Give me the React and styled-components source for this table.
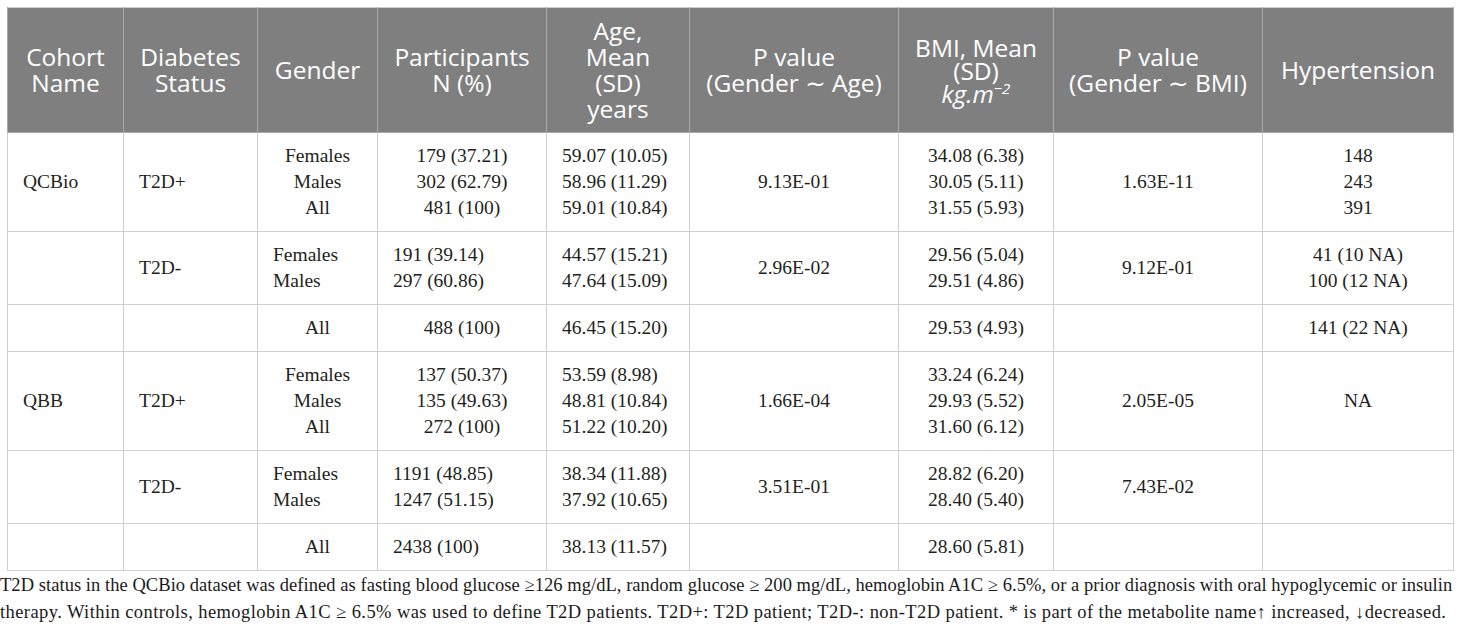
import React from 'react';
import styled, { createGlobalStyle } from 'styled-components';

const GlobalStyle = createGlobalStyle`
  html, body {
    margin: 0;
    padding: 0;
    background: #ffffff;
  }
`;

const Page = styled.div`
  width: 1460px;
  padding-top: 7px;
`;

const Table = styled.table`
  margin-left: 7px;
  width: 1446px;
  table-layout: fixed;
  border-collapse: collapse;
  border: 1px solid #cfcfcf;
`;

const HeadCell = styled.th`
  background: #7f7f7f;
  color: #ffffff;
  font-family: 'Open Sans', 'DejaVu Sans', sans-serif;
  font-weight: 400;
  font-size: 24.5px;
  line-height: ${(p) => (p.$tight ? '23px' : '26px')};
  text-align: center;
  vertical-align: middle;
  padding: 10px 4px;
  height: 104px;
  border-left: 1px solid #a9a9a9;
  border-right: 1px solid #a9a9a9;
  border-bottom: 1px solid #a9a9a9;

  i {
    font-style: italic;
  }
  sup {
    font-size: 15px;
    line-height: 0;
    vertical-align: 9px;
  }
`;

const Cell = styled.td`
  font-family: 'Liberation Serif', 'Times New Roman', serif;
  font-size: 19.5px;
  line-height: 26px;
  color: #231f20;
  text-align: ${(p) => p.$align};
  vertical-align: middle;
  padding: 10px ${(p) => (p.$align === 'left' ? '4px 10px 15px' : '4px')};
  border: 1px solid #cfcfcf;
  white-space: nowrap;
`;

const Footnote = styled.p`
  margin: 0;
  padding-top: 1px;
  font-family: 'Liberation Serif', 'Times New Roman', serif;
  font-size: 18.5px;
  line-height: 27px;
  color: #1a1a1a;
`;

// the two footnote lines both fill the width in the source figure
const FootLine = styled.span`
  display: block;
  white-space: nowrap;
  letter-spacing: ${(p) => p.$spread}px;
`;

const widths = [116, 134, 120, 169, 143, 209, 155, 209, 191];

const rows = [
  {
    cohort: 'QCBio',
    status: 'T2D+',
    gender: ['Females', 'Males', 'All'],
    genderAlign: 'center',
    n: ['179 (37.21)', '302 (62.79)', '481 (100)'],
    nAlign: 'center',
    age: ['59.07 (10.05)', '58.96 (11.29)', '59.01 (10.84)'],
    pAge: '9.13E-01',
    bmi: ['34.08 (6.38)', '30.05 (5.11)', '31.55 (5.93)'],
    pBmi: '1.63E-11',
    hyp: ['148', '243', '391'],
  },
  {
    cohort: '',
    status: 'T2D-',
    gender: ['Females', 'Males'],
    genderAlign: 'left',
    n: ['191 (39.14)', '297 (60.86)'],
    nAlign: 'left',
    age: ['44.57 (15.21)', '47.64 (15.09)'],
    pAge: '2.96E-02',
    bmi: ['29.56 (5.04)', '29.51 (4.86)'],
    pBmi: '9.12E-01',
    hyp: ['41 (10 NA)', '100 (12 NA)'],
  },
  {
    cohort: '',
    status: '',
    gender: ['All'],
    genderAlign: 'center',
    n: ['488 (100)'],
    nAlign: 'center',
    age: ['46.45 (15.20)'],
    pAge: '',
    bmi: ['29.53 (4.93)'],
    pBmi: '',
    hyp: ['141 (22 NA)'],
  },
  {
    cohort: 'QBB',
    status: 'T2D+',
    gender: ['Females', 'Males', 'All'],
    genderAlign: 'center',
    n: ['137 (50.37)', '135 (49.63)', '272 (100)'],
    nAlign: 'center',
    age: ['53.59 (8.98)', '48.81 (10.84)', '51.22 (10.20)'],
    pAge: '1.66E-04',
    bmi: ['33.24 (6.24)', '29.93 (5.52)', '31.60 (6.12)'],
    pBmi: '2.05E-05',
    hyp: ['NA'],
  },
  {
    cohort: '',
    status: 'T2D-',
    gender: ['Females', 'Males'],
    genderAlign: 'left',
    n: ['1191 (48.85)', '1247 (51.15)'],
    nAlign: 'left',
    age: ['38.34 (11.88)', '37.92 (10.65)'],
    pAge: '3.51E-01',
    bmi: ['28.82 (6.20)', '28.40 (5.40)'],
    pBmi: '7.43E-02',
    hyp: [],
  },
  {
    cohort: '',
    status: '',
    gender: ['All'],
    genderAlign: 'center',
    n: ['2438 (100)'],
    nAlign: 'left',
    age: ['38.13 (11.57)'],
    pAge: '',
    bmi: ['28.60 (5.81)'],
    pBmi: '',
    hyp: [],
  },
];

const Lines = ({ items }) =>
  items.map((t, i) => (
    <React.Fragment key={i}>
      {i > 0 && <br />}
      {t}
    </React.Fragment>
  ));

const App = () => (
  <Page>
    <GlobalStyle />
    <Table>
      <colgroup>
        {widths.map((w, i) => (
          <col key={i} style={{ width: w }} />
        ))}
      </colgroup>
      <thead>
        <tr>
          <HeadCell>Cohort<br />Name</HeadCell>
          <HeadCell>Diabetes<br />Status</HeadCell>
          <HeadCell>Gender</HeadCell>
          <HeadCell>Participants<br />N (%)</HeadCell>
          <HeadCell>Age,<br />Mean<br />(SD)<br />years</HeadCell>
          <HeadCell>P value<br />(Gender ∼ Age)</HeadCell>
          <HeadCell $tight>
            BMI, Mean<br />(SD)<br />
            <i>kg.m<sup>−2</sup></i>
          </HeadCell>
          <HeadCell>P value<br />(Gender ∼ BMI)</HeadCell>
          <HeadCell>Hypertension</HeadCell>
        </tr>
      </thead>
      <tbody>
        {rows.map((r, i) => (
          <tr key={i}>
            <Cell $align="left">{r.cohort}</Cell>
            <Cell $align="left">{r.status}</Cell>
            <Cell $align={r.genderAlign}><Lines items={r.gender} /></Cell>
            <Cell $align={r.nAlign}><Lines items={r.n} /></Cell>
            <Cell $align="left"><Lines items={r.age} /></Cell>
            <Cell $align="center">{r.pAge}</Cell>
            <Cell $align="center"><Lines items={r.bmi} /></Cell>
            <Cell $align="center">{r.pBmi}</Cell>
            <Cell $align="center"><Lines items={r.hyp} /></Cell>
          </tr>
        ))}
      </tbody>
    </Table>
    <Footnote>
      <FootLine $spread={0.05}>
        T2D status in the QCBio dataset was defined as fasting blood glucose ≥126 mg/dL, random glucose ≥ 200 mg/dL, hemoglobin A1C ≥ 6.5%, or a prior diagnosis with oral hypoglycemic or insulin
      </FootLine>
      <FootLine $spread={0.42}>
        therapy. Within controls, hemoglobin A1C ≥ 6.5% was used to define T2D patients. T2D+: T2D patient; T2D-: non-T2D patient. * is part of the metabolite name↑ increased, ↓decreased.
      </FootLine>
    </Footnote>
  </Page>
);

export default App;
